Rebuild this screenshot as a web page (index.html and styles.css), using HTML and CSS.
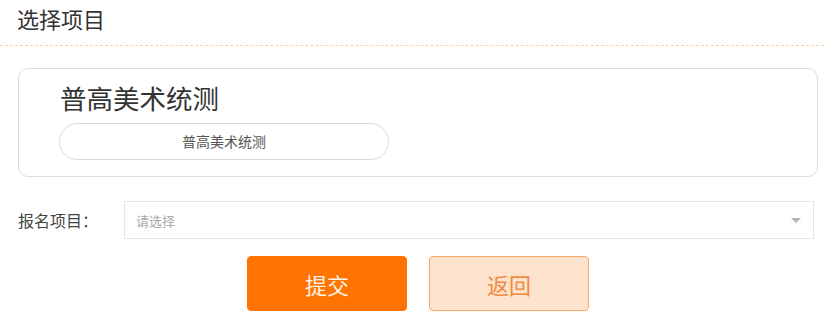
FILE: index.html
```html
<!DOCTYPE html>
<html lang="zh-CN">
<head>
<meta charset="utf-8">
<link rel="stylesheet" href="styles.css">
</head>
<body>
<div class="page">
  <div class="header"><h1 class="title">选择项目</h1></div>
  <div class="card">
    <div class="card-title">普高美术统测</div>
    <div class="pill">普高美术统测</div>
  </div>
  <div class="form-row">
    <label class="label">报名项目：</label>
    <div class="select">
      <span class="placeholder">请选择</span>
      <span class="arrow"></span>
    </div>
  </div>
  <div class="actions">
    <button class="btn btn-primary">提交</button>
    <button class="btn btn-secondary">返回</button>
  </div>
</div>
</body>
</html>
```
FILE: styles.css
```css
* { box-sizing: border-box; }
html, body { margin: 0; padding: 0; background: #fff; }
body {
  font-family: "Noto Sans CJK SC", "Noto Sans", "Liberation Sans", sans-serif;
  color: #333;
  width: 824px;
  height: 319px;
  overflow: hidden;
}
.header {
  height: 46px;
  border-bottom: 1px dashed #fbd2a6;
}
.title {
  margin: 0;
  padding-left: 17px;
  font-size: 22px;
  font-weight: 400;
  line-height: 36px;
  color: #333;
}
.card {
  margin: 22px 6px 0 18px;
  height: 109px;
  border: 1px solid #dcdcdc;
  border-radius: 10px;
  padding: 12px 0 0 41px;
}
.card-title {
  font-size: 26.5px;
  line-height: 34px;
  color: #333;
}
.pill {
  margin-top: 8px;
  margin-left: -1px;
  width: 330px;
  height: 37px;
  border: 1px solid #d9d9d9;
  border-radius: 19px;
  font-size: 14px;
  line-height: 35px;
  text-align: center;
  color: #555;
}
.form-row {
  margin-top: 24px;
  display: flex;
  align-items: center;
  padding-left: 18px;
}
.label {
  width: 106px;
  font-size: 16px;
  color: #444;
}
.select {
  width: 690px;
  height: 38px;
  border: 1px solid #e6e6e6;
  display: flex;
  align-items: center;
  justify-content: space-between;
  padding: 0 12px 0 11px;
}
.placeholder {
  font-size: 13px;
  color: #aaa;
}
.arrow {
  width: 0;
  height: 0;
  border-left: 5px solid transparent;
  border-right: 5px solid transparent;
  border-top: 5px solid #b3b3b3;
}
.actions {
  margin-top: 17px;
  display: flex;
  gap: 22px;
  padding-left: 247px;
}
.btn {
  width: 160px;
  height: 55px;
  border-radius: 4px;
  font-family: inherit;
  font-size: 22px;
  cursor: pointer;
  padding: 0;
}
.btn-primary {
  background: #ff7300;
  border: 1px solid #ff7300;
  color: #fff3e8;
}
.btn-secondary {
  background: #fde3cd;
  border: 1px solid #f6a866;
  color: #f08a3c;
}
```
